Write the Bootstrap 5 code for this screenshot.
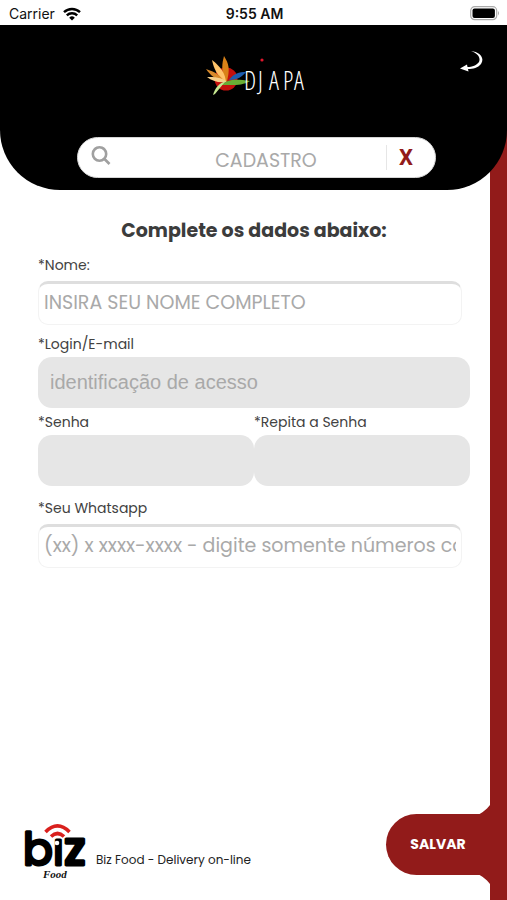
<!DOCTYPE html>
<html lang="pt-BR">
<head>
<meta charset="utf-8">
<meta name="viewport" content="width=device-width, initial-scale=1">
<title>Djapa - Cadastro</title>
<link href="https://cdn.jsdelivr.net/npm/bootstrap@5.3.0/dist/css/bootstrap.min.css" rel="stylesheet">
<style>
:root { --brand: #921b1a; --ink: #424242; --hint: #a9a9a9; }
body { font-family: Poppins, Inter, "Liberation Sans", sans-serif; color: var(--ink); background: #fff; }
.screen { background: linear-gradient(var(--brand), var(--brand)) right / 17px 100% no-repeat #fff; }
.status-bar { height: 25px; padding: 2px 7px 0 9px; font-family: Inter, sans-serif; font-size: 14px; line-height: 22px; color: #111; background: #fff; }
.status-side { flex: 1 1 0; }
.clock { font-weight: 600; }
.top-bar { background: #000; border-radius: 0 0 60px 60px; padding-bottom: 12px; }
.brand-row { height: 112px; padding: 24px 24px 0; }
.brand-side { flex: 1 1 0; }
.search-pill { height: 41px; margin: 0 71px 0 77px; background: #fff; border: 1px solid #d5d5d5; border-radius: 21px; }
.search-icon { width: 68px; padding: 8px 0 0 13px; }
.search-pill input { font-size: 19px; line-height: 24px; padding: 7px 0 0; }
.search-pill .clear { width: 49px; margin: 7px 0; border-left: 1px solid #e6e6e6; }
.clear button { width: 38px; font: 700 22px/26px Roboto, sans-serif; color: var(--brand); }
input::placeholder { color: var(--hint) !important; opacity: 1; }
.signup { padding: 29px 37px 0 38px; }
.signup h1 { font-size: 19px; line-height: 24px; font-weight: 700; color: #3c3c3c; margin-bottom: 12px; }
.signup label { font-size: 14px; line-height: 20px; }
.line-input { display: block; width: calc(100% - 8px); height: 44px; margin-top: 6px; padding: 0 5px 3px; font-size: 19px; border: 1px solid #f3f3f3; border-top: 3px solid #dedede; border-radius: 10px; background: #fff; }
.fill-input { display: block; width: 100%; height: 51px; margin-top: 3px; padding: 0 12px; font: 20px "Liberation Sans", sans-serif; border: 0; border-radius: 14px; background: #e6e6e6; }
.login-field { margin-top: 9px; }
.bottom-bar { padding: 0 0 19px 24px; }
.tagline { font-size: 12px; line-height: 18px; color: #222; margin: 30px 0 0 6px; }
.save { position: relative; width: 121px; height: 61px; margin-bottom: 6px; padding: 0 17px 0 0; border: 0; border-radius: 31px 0 0 31px; background: var(--brand); color: #fff; font-size: 14px; font-weight: 700; }
.save::before, .save::after { content: ""; position: absolute; right: 17px; width: 12px; height: 10px; background: var(--brand); }
.save::before { top: -9px; clip-path: polygon(100% 0, 100% 100%, 0 100%, 40% 70%, 75% 35%); }
.save::after { bottom: -9px; clip-path: polygon(0 0, 100% 0, 100% 100%, 75% 65%, 40% 30%); }
</style>
<script src="https://cdn.jsdelivr.net/npm/bootstrap@5.3.0/dist/js/bootstrap.bundle.min.js"></script>
</head>
<body>
<div class="screen d-flex flex-column min-vh-100">
  <div class="status-bar d-flex align-items-center">
    <div class="status-side d-flex align-items-center">
      <span>Carrier</span>
      <svg class="ms-2" width="18" height="14" viewBox="0 0 18 14" fill="none" stroke="#000" stroke-width="2.400" aria-hidden="true"><path d="M1 5.200a11.500 11.500 0 0 1 16 0M3.800 8.300a7.600 7.600 0 0 1 10.400 0"/><path d="M6.200 10.700a4 4 0 0 1 5.600 0L9 13.600z" fill="#000" stroke="none"/></svg>
    </div>
    <span class="clock">9:55 AM</span>
    <div class="status-side d-flex justify-content-end">
      <svg width="30" height="15" viewBox="0 0 30 15" aria-hidden="true"><rect x=".7" y=".7" width="26" height="13" rx="4" fill="#fff" stroke="#aaa" stroke-width="1.200"/><rect x="2.500" y="2.500" width="22.400" height="9.400" rx="2" fill="#000"/><path d="M28 5q2 2.200 0 4.400z" fill="#aaa"/></svg>
    </div>
  </div>

  <header class="top-bar">
    <div class="brand-row d-flex align-items-start">
      <div class="brand-side"></div>
      <svg class="mt-1" width="102" height="44" viewBox="203 53 102 44" role="img" aria-label="Djapa">
        <circle cx="226" cy="79" r="11.500" fill="#c4100d"/>
        <path d="M225 81C221 69 222 64 224 56c5 8 6 13 3 25z" fill="#d98218"/>
        <path d="M226 82C217 76 214 69 212 60c9 7 13 13 14 22z" fill="#ffc46a"/>
        <path d="M225 82c-10-3-14-6-19-13 9 3 14 6 19 13z" fill="#d98a2a"/>
        <path d="M227 82c-9 1-15-1-20-5 8 0 14 0 20 5z" fill="#f7d08a"/>
        <path d="M229 80c5-7 10-8 17-8-4 5-9 8-17 8z" fill="#1d5cae"/>
        <path d="M221 85c7-6 15-6 29-4-8 5-17 4-29 4z" fill="#69ad35"/>
        <path d="M213 95c2-7 6-12 13-14-4 4-7 8-11 13z" fill="#c7e891"/>
        <circle cx="262" cy="60" r="1.600" fill="#e0162c"/>
        <text y="90" x="244 258 269 283 294" fill="#fff" font-family="'Open Sans Condensed Light', 'Open Sans Condensed', 'Liberation Sans Narrow', sans-serif" font-weight="300" font-size="25">DJAPA</text>
      </svg>
      <div class="brand-side d-flex justify-content-end">
        <button type="button" class="btn p-0 border-0 lh-1" aria-label="Voltar">
          <svg width="24" height="25" viewBox="0 0 24 25" aria-hidden="true"><path d="M12 2c9 1 14 7 10 13-3 4-8 5-13 5l.5 2.500L1 19.500 8 15.500 8.500 18C13 18 18 16 20 13c2-5-2-9-8-11z" fill="#fff"/></svg>
        </button>
      </div>
    </div>
    <div class="search-pill d-flex">
      <label class="search-icon flex-shrink-0" for="search" aria-label="Buscar">
        <svg class="d-block" width="20" height="20" viewBox="0 0 20 20" fill="none" stroke="#a0a0a0" stroke-width="2.600" aria-hidden="true"><circle cx="8.500" cy="8" r="6.700"/><path d="m13 12.500 5.500 5.500"/></svg>
      </label>
      <input id="search" class="flex-grow-1 w-100 border-0 bg-transparent text-center" type="text" placeholder="CADASTRO">
      <div class="clear flex-shrink-0"><button type="button" class="btn p-0 border-0 d-block" aria-label="Limpar">X</button></div>
    </div>
  </header>

  <form class="signup flex-grow-1" id="signup">
    <h1 class="text-center">Complete os dados abaixo:</h1>
    <div>
      <label class="d-block" for="nome">*Nome:</label>
      <input class="line-input" id="nome" type="text" placeholder="INSIRA SEU NOME COMPLETO">
    </div>
    <div class="login-field">
      <label class="d-block" for="login">*Login/E-mail</label>
      <input class="fill-input" id="login" type="text" placeholder="identificação de acesso">
    </div>
    <div class="row g-0 mt-1">
      <div class="col-6">
        <label class="d-block" for="senha">*Senha</label>
        <input class="fill-input" id="senha" type="password">
      </div>
      <div class="col-6">
        <label class="d-block" for="repita">*Repita a Senha</label>
        <input class="fill-input" id="repita" type="password">
      </div>
    </div>
    <div class="mt-2 pt-1">
      <label class="d-block" for="whats">*Seu Whatsapp</label>
      <input class="line-input" id="whats" type="tel" placeholder="(xx) x xxxx-xxxx - digite somente números com DDD">
    </div>
  </form>

  <footer class="bottom-bar d-flex align-items-end justify-content-between">
    <div class="d-flex align-items-start">
      <svg class="overflow-visible" width="66" height="60" viewBox="24 818 66 60" role="img" aria-label="biz Food">
        <g fill="none" stroke="#d9201d" stroke-width="3.600"><path d="M45.500 829q12-12 24 0"/><path d="M51 833.500q6.500-6 13 0"/></g>
        <g fill="#000" stroke="#000" stroke-width="3" stroke-linejoin="round" font-family="Poppins, Inter, sans-serif" font-weight="400">
          <text x="23" y="862" font-size="44">b</text>
          <text x="53" y="862" font-size="44">ı</text>
          <text x="64" y="862" font-size="46" font-weight="500">z</text>
        </g>
        <circle cx="57" cy="840" r="2.300" fill="#fff"/>
        <text x="43" y="875" font-family="'Liberation Serif', serif" font-style="italic" font-weight="700" font-size="11" fill="#111">Food</text>
      </svg>
      <p class="tagline">Biz Food - Delivery on-line</p>
    </div>
    <button class="save" type="submit" form="signup">SALVAR</button>
  </footer>
</div>
</body>
</html>
